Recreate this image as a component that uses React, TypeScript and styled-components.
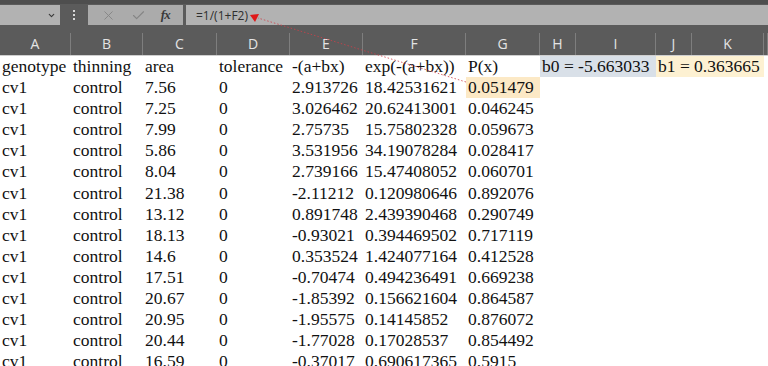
import * as React from 'react';
import styled, { createGlobalStyle } from 'styled-components';
import { X, Check, ChevronDown } from 'lucide-react';

const GlobalStyle = createGlobalStyle`
  html, body {
    margin: 0;
    padding: 0;
    overflow: hidden;
    background: #ffffff;
  }
`;

const COLS = '71px 72px 74px 73px 73px 103px 74px 36px 80px 36px 72px 1fr';

const Window = styled.div`
  position: relative;
  width: 768px;
  height: 366px;
  overflow: hidden;
  background: #ffffff;
`;

const Chrome = styled.div`
  background: #5b5b5b;
  border-top: 4px solid #4e4e4e;
`;

const FormulaBar = styled.div`
  display: flex;
  align-items: stretch;
  height: 20px;
  padding-top: 1px;
`;

const NameBox = styled.div`
  width: 60px;
  background: #b2b2b2;
  display: flex;
  align-items: center;
  justify-content: flex-end;
  padding-right: 4px;
  box-sizing: border-box;
  color: #3a3a3a;
`;

const Grip = styled.div`
  width: 28px;
  display: flex;
  flex-direction: column;
  align-items: center;
  justify-content: center;
  gap: 2px;

  span {
    width: 2px;
    height: 2px;
    background: #d8d8d8;
  }
`;

const Buttons = styled.div`
  width: 95px;
  background: #ababab;
  display: flex;
  align-items: center;
  justify-content: space-around;
  padding: 0 6px;
  box-sizing: border-box;
  color: #858585;
`;

const Fx = styled.span`
  font-family: 'Liberation Serif', serif;
  font-style: italic;
  font-weight: bold;
  font-size: 13px;
  color: #3a3a3a;
  letter-spacing: -1px;
`;

const Input = styled.div`
  flex: 1;
  margin-left: 3px;
  background: #b2b2b2;
  display: flex;
  align-items: center;
  padding-left: 10px;
  font-family: 'Open Sans', 'Liberation Sans', sans-serif;
  font-size: 12px;
  color: #2e2e2e;
`;

const HeaderRow = styled.div`
  display: grid;
  grid-template-columns: ${COLS};
  height: 30px;
  border-bottom: 1px solid #cfcfcf;
`;

const HeaderCell = styled.div`
  align-self: end;
  height: 22px;
  border-right: 1px solid #7e7e7e;
  display: flex;
  align-items: center;
  justify-content: center;
  font-family: 'Open Sans', 'Liberation Sans', sans-serif;
  font-size: 14px;
  color: #e4e4e4;
  padding-bottom: 1px;
  box-sizing: border-box;
`;

const Sheet = styled.div`
  display: grid;
  grid-template-columns: ${COLS};
  grid-auto-rows: 21.1px;
  font-family: 'Liberation Serif', 'Times New Roman', serif;
  font-size: 17.5px;
  color: #111111;
`;

const Cell = styled.div<{ $bg?: string; $span?: number }>`
  background: ${({ $bg }) => $bg || 'transparent'};
  grid-column: ${({ $span }) => ($span ? `span ${$span}` : 'auto')};
  padding-left: 2px;
  line-height: 21px;
  white-space: nowrap;
  overflow: visible;
`;

const Trace = styled.svg`
  position: absolute;
  left: 0;
  top: 0;
  pointer-events: none;
`;

const columns = ['A', 'B', 'C', 'D', 'E', 'F', 'G', 'H', 'I', 'J', 'K', ''];

const rows: string[][] = [
  ['7.56', '2.913726', '18.42531621', '0.051479'],
  ['7.25', '3.026462', '20.62413001', '0.046245'],
  ['7.99', '2.75735', '15.75802328', '0.059673'],
  ['5.86', '3.531956', '34.19078284', '0.028417'],
  ['8.04', '2.739166', '15.47408052', '0.060701'],
  ['21.38', '-2.11212', '0.120980646', '0.892076'],
  ['13.12', '0.891748', '2.439390468', '0.290749'],
  ['18.13', '-0.93021', '0.394469502', '0.717119'],
  ['14.6', '0.353524', '1.424077164', '0.412528'],
  ['17.51', '-0.70474', '0.494236491', '0.669238'],
  ['20.67', '-1.85392', '0.156621604', '0.864587'],
  ['20.95', '-1.95575', '0.14145852', '0.876072'],
  ['20.44', '-1.77028', '0.17028537', '0.854492'],
  ['16.59', '-0.37017', '0.690617365', '0.5915'],
];

export default function App() {
  return (
    <Window>
      <GlobalStyle />
      <Chrome>
        <FormulaBar>
          <NameBox>
            <ChevronDown size={9} strokeWidth={3} />
          </NameBox>
          <Grip>
            <span />
            <span />
            <span />
          </Grip>
          <Buttons>
            <X size={15} strokeWidth={1.5} />
            <Check size={15} strokeWidth={1.8} />
            <Fx>fx</Fx>
          </Buttons>
          <Input>=1/(1+F2)</Input>
        </FormulaBar>
        <HeaderRow>
          {columns.map((c, i) => (
            <HeaderCell key={i}>{c}</HeaderCell>
          ))}
        </HeaderRow>
      </Chrome>
      <Sheet>
        <Cell>genotype</Cell>
        <Cell>thinning</Cell>
        <Cell>area</Cell>
        <Cell>tolerance</Cell>
        <Cell>-(a+bx)</Cell>
        <Cell>exp(-(a+bx))</Cell>
        <Cell>P(x)</Cell>
        <Cell $bg="#d9e0e8" $span={2}>b0 = -5.663033</Cell>
        <Cell $bg="#fdf1d2" $span={2}>b1 = 0.363665</Cell>
        <Cell />
        {rows.map((r, i) => (
          <React.Fragment key={i}>
            <Cell>cv1</Cell>
            <Cell>control</Cell>
            <Cell>{r[0]}</Cell>
            <Cell>0</Cell>
            <Cell>{r[1]}</Cell>
            <Cell>{r[2]}</Cell>
            <Cell $bg={i === 0 ? '#fce9c6' : undefined}>{r[3]}</Cell>
            <Cell $span={5} />
          </React.Fragment>
        ))}
      </Sheet>
      <Trace width="768" height="366">
        <line x1="466" y1="82" x2="258" y2="18" stroke="#d0404a" strokeWidth="1" strokeDasharray="1.5 2" opacity="0.8" />
        <polygon points="250,15 259,14 255,22" fill="#e01818" />
      </Trace>
    </Window>
  );
}
